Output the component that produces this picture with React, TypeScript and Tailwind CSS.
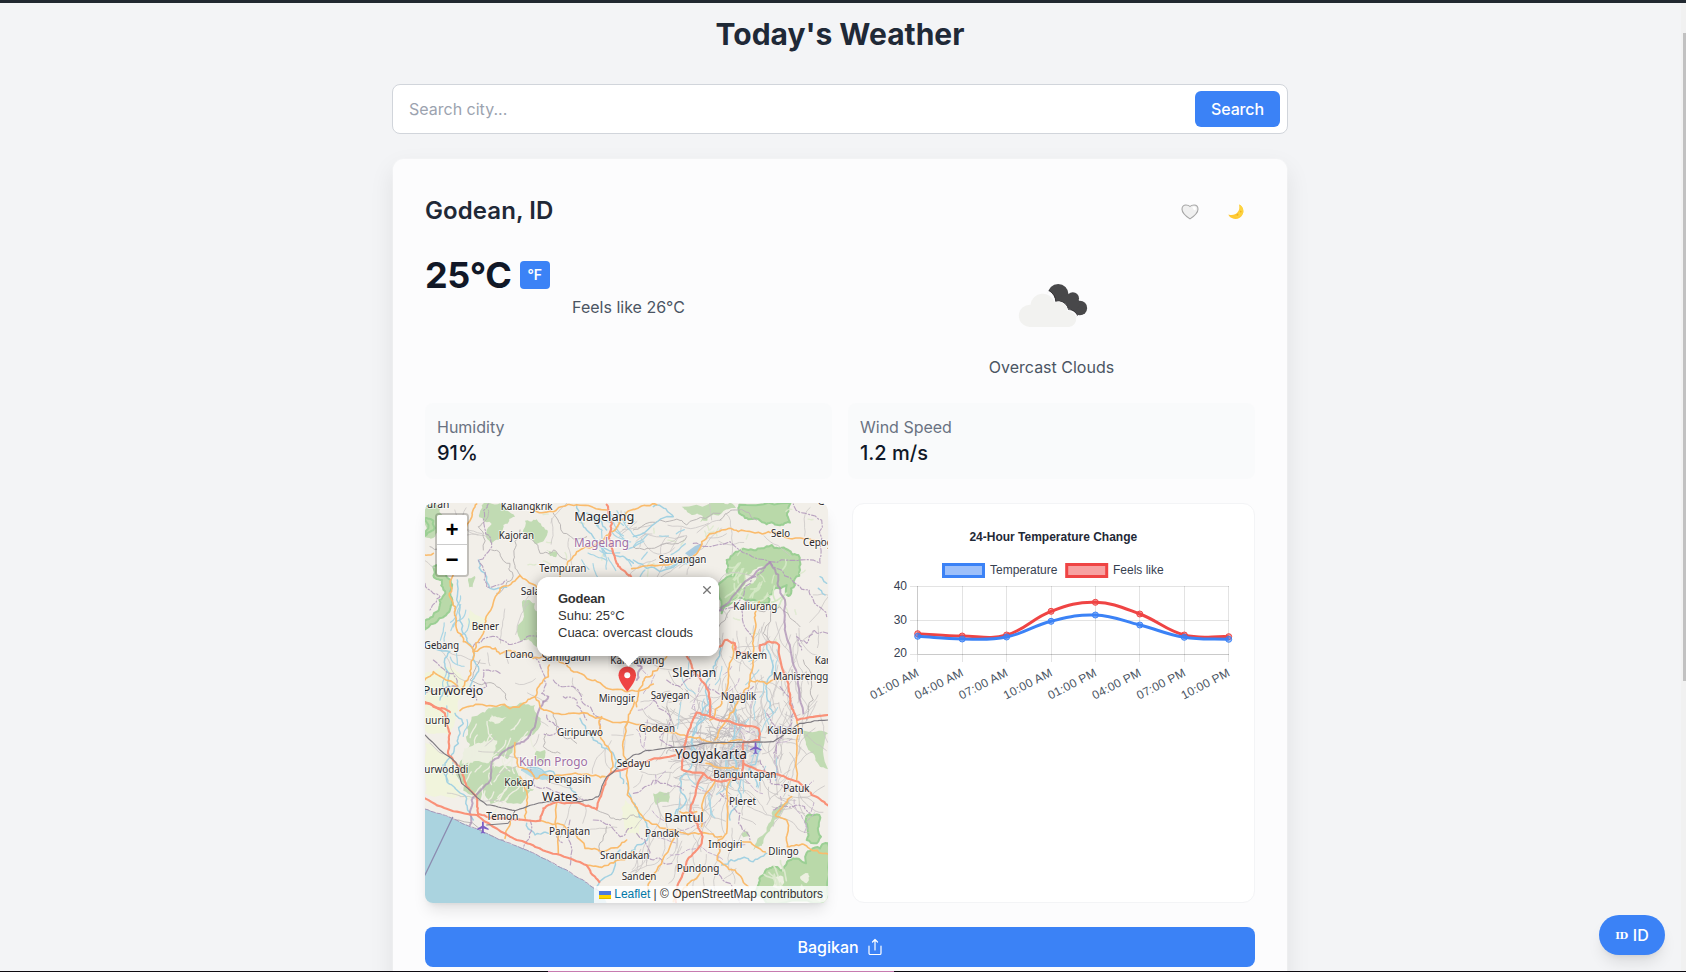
import React from "react";

type Pt = [number, number];

/* ---------- helpers for the map drawing ---------- */

function rng(seed: number) {
  let s = (seed * 2654435761) >>> 0;
  return () => {
    s = (s + 0x6d2b79f5) >>> 0;
    let t = s;
    t = Math.imul(t ^ (t >>> 15), t | 1);
    t ^= t + Math.imul(t ^ (t >>> 7), t | 61);
    return ((t ^ (t >>> 14)) >>> 0) / 4294967296;
  };
}

function parse(s: string): Pt[] {
  return s.split(" ").map((p) => p.split(",").map(Number) as Pt);
}

/* Subdivides a polyline and displaces it a little, so that it reads as a surveyed line. */
function wiggle(s: string, amount: number, seed: number, close = false) {
  const r = rng(seed);
  let pts = parse(s);
  if (close) pts = [...pts, pts[0]];
  let a = amount;
  for (let k = 0; k < 3; k++) {
    const out: Pt[] = [pts[0]];
    for (let i = 1; i < pts.length; i++) {
      const [x0, y0] = pts[i - 1];
      const [x1, y1] = pts[i];
      const d = Math.hypot(x1 - x0, y1 - y0);
      if (d > 9) {
        const m = Math.min(a, d / 5);
        out.push([(x0 + x1) / 2 + (r() - 0.5) * 2 * m, (y0 + y1) / 2 + (r() - 0.5) * 2 * m]);
      }
      out.push([x1, y1]);
    }
    pts = out;
    a *= 0.7;
  }
  return "M" + pts.map((p) => p[0].toFixed(1) + " " + p[1].toFixed(1)).join("L") + (close ? "Z" : "");
}

function walks(seed: number, n: number, x: number, y: number, w: number, h: number, step: number, len: number, dir?: number) {
  const r = rng(seed);
  let d = "";
  for (let i = 0; i < n; i++) {
    let px = x + r() * w;
    let py = y + r() * h;
    let a = dir === undefined ? Math.floor(r() * 4) * 1.571 + 0.25 + (r() - 0.5) * 0.5 : dir + (r() - 0.5) * 0.5;
    d += `M${px.toFixed(1)} ${py.toFixed(1)}`;
    const k = 3 + Math.floor(r() * len);
    for (let j = 0; j < k; j++) {
      a += (r() - 0.5) * 0.8;
      px += Math.cos(a) * step;
      py += Math.sin(a) * step;
      d += `L${px.toFixed(1)} ${py.toFixed(1)}`;
    }
  }
  return d;
}

const forests = [
  "15,15 48,12 62,40 80,70 60,84 45,110 15,112",
  "185,15 240,10 285,50 250,75 242,110 215,132 196,102 215,72 178,52",
  "315,62 350,58 382,90 374,118 350,132 330,110 308,95",
  "378,150 410,155 408,172 390,168",
  "310,300 345,310 368,360 372,405 350,442 325,418 300,422 312,350",
  "145,235 165,228 158,262 148,262",
  "785,20 915,12 948,24 905,40 862,62 840,66 848,48 815,45",
  "155,650 220,622 300,608 345,615 362,655 332,708 292,728 262,778 222,770 208,812 180,905 130,872 116,800 150,732 140,682",
  "210,800 288,800 342,868 302,912 212,912 190,880",
  "350,752 375,750 372,790 352,788",
  "700,880 745,875 745,908 708,915",
  "1090,912 1055,940 1018,1012 1000,1050 1030,1030 1060,975 1110,905",
  "1142,690 1224,700 1224,808 1200,800 1165,750",
  "965,1000 985,995 988,1008 970,1012",
];
const reserves = [
  "15,55 40,62 44,84 15,108",
  "40,200 66,198 92,240 97,300 88,335 58,355 15,388 15,362 58,322 76,280 66,240 42,232",
  "920,180 985,150 1025,145 1055,135 1105,150 1135,165 1140,210 1125,255 1105,288 1100,255 1065,265 1045,288 1045,310 1020,308 985,300 940,300 905,340 898,250 945,225 920,212",
  "958,14 1112,8 1110,68 1080,76 1040,73 985,58 965,45",
  "1160,948 1198,945 1203,1010 1190,1030 1160,1020",
  "1018,1135 1058,1100 1085,1112 1118,1075 1158,1090 1178,1045 1224,1030 1224,1209 1040,1209 1008,1180",
];
const farmland = [
  "15,520 100,500 150,560 110,640 90,700 15,690",
  "15,730 90,770 120,850 160,900 15,880",
  "150,330 210,345 190,400 150,390",
  "615,900 660,930 660,1020 620,1000",
];
const clearings = [
  "132,745 175,728 232,722 205,790 150,788 125,792",
  "215,640 260,650 240,668 205,662",
  "975,225 1030,200 1000,250 965,270",
  "1060,1135 1090,1130 1085,1165 1058,1160",
  "1140,1130 1165,1120 1160,1150",
];
const primary = [
  "170,12 150,62 120,120 95,235 88,280 106,330 108,380 130,425 160,455 152,525 120,572 78,540 40,515 15,540",
  "160,455 190,400 205,340 240,265 300,226 352,262",
  "160,455 200,440 240,462 285,455 340,475 395,462 430,490 480,520 540,548 621,575 700,552",
  "330,26 400,35 470,14 560,30",
  "420,230 442,195 470,155 520,140 565,105 600,60 645,28 710,14",
  "120,632 200,618 270,626 320,605 345,590 352,565 385,530 388,495",
  "345,590 362,625 378,630 450,640 540,652 632,668 715,690 805,712 860,724 965,720",
  "635,206 745,195 825,165 860,115 905,90 955,95 1045,95 1095,112 1195,122",
  "1018,305 1005,360 998,430 990,540 970,585 930,640 885,720",
  "940,430 925,510 905,600 870,660",
  "640,600 625,660 610,750 622,885 675,960 735,985 815,1000 905,1010",
  "990,540 1040,552 1085,540",
  "740,470 690,530 668,555 650,620",
  "1130,662 1130,840",
  "1115,890 1066,945 1100,960 1102,1040 1160,1038 1224,1062",
  "930,842 920,1000 895,1020 892,1080 945,1110 985,1160",
  "885,840 850,900 845,980",
  "770,1000 715,1100 675,1190",
  "965,1025 1036,1056",
  "545,650 540,700 575,760 572,820",
  "285,728 295,800 345,835 400,828 500,822 555,830",
  "300,830 322,910 316,955",
  "360,962 430,975 495,1045 560,1052 620,1020",
  "410,910 415,1060",
  "270,958 255,1015",
  "500,1096 570,1090 640,1055",
  "858,790 955,805",
  "845,1110 800,1160 760,1205",
  "780,935 830,935",
  "15,165 40,160",
];
const trunk = [
  "560,14 576,70 566,112 590,190 615,214 640,240",
  "15,606 75,640 90,700 84,760 112,795 140,860 172,898 175,945",
  "15,895 90,930 170,945 270,1010 330,1032 410,1062 500,1096 538,1146",
  "175,942 240,955 360,962 370,925 410,905 480,910 530,928 552,858 572,820 650,790 765,766",
  "898,440 915,420 945,430 946,450 985,460",
  "1020,452 1020,435 1045,425 1077,435 1085,500 1105,560 1110,612 1132,660 1224,645",
  "800,468 825,520 865,572 870,650",
  "830,638 800,710 785,808 850,820 875,840 912,842 960,835 970,790 972,724 1018,720 1016,686 915,662 870,650 830,638",
  "850,820 828,870 810,935 832,970 845,1000 845,1030 805,1075 775,1150 768,1209",
  "970,790 1045,820 1135,845 1175,885 1224,916",
  "15,610 45,622 90,636",
];
const rivers = [
  "15,425 90,455 75,500 85,560 60,600",
  "112,240 110,300 125,370 140,420 160,450 175,500 150,560",
  "175,180 200,230 210,265 260,262",
  "105,640 130,670 115,710 100,760 75,790 85,850 140,895 160,960",
  "480,655 520,720 560,745 585,800 610,850",
  "470,15 480,60 500,90 530,130 560,160",
  "500,40 540,60 560,90",
  "540,120 600,170 640,190",
  "900,440 880,500 860,560 875,620 820,700 830,760",
  "1040,430 1060,500 1040,570 1060,640",
  "940,600 950,660 930,760 960,830 960,900 930,960",
  "1015,690 1020,750 990,800 1010,860",
  "600,1050 560,1130 530,1165",
  "620,850 645,920 680,970 670,1030 630,1060",
  "870,600 815,720 820,780 780,840 800,900 760,960",
  "905,1095 950,1080 1000,1085 1040,1060",
  "320,970 345,1005 385,1000",
  "700,20 760,50 640,110",
  "640,180 720,215 830,180",
  "1200,230 1220,250",
  "1195,265 1215,285",
  "305,810 400,815 450,860 470,890",
];
const streets = [
  "300,90 280,180 300,225",
  "205,30 175,80 190,150",
  "215,150 270,190 275,240 230,280",
  "305,100 360,160 400,150 440,180",
  "30,140 80,170 130,190",
  "400,40 430,100 500,110",
  "640,90 720,60 800,75 900,40",
  "640,140 740,130 800,110",
  "900,60 950,30 1010,60",
  "930,330 890,400 900,440",
  "1010,330 1080,320 1140,380",
  "740,620 760,700 740,760",
  "180,480 150,540 230,560 260,600",
  "400,640 420,700 470,730",
  "90,960 250,1020",
  "1050,320 1030,400 1060,430",
  "530,930 600,960 660,950",
  "560,980 540,1060",
  "420,760 370,740 380,700",
  "1150,480 1180,600 1160,660",
];
const borders = [
  "205,12 190,60 215,130 175,180 200,262 260,240",
  "160,440 230,410 300,425 370,400",
  "340,470 375,530 365,580 385,590",
  "40,480 100,520 115,560 15,580",
  "240,520 190,510 200,560 150,565 170,600",
  "400,540 460,560 520,640 540,700",
  "430,590 470,600 500,660",
  "380,645 420,690 370,700",
  "820,130 930,125 1050,185",
  "1050,185 960,300 900,330",
  "1050,185 1200,190 1205,60 1120,12",
  "1050,185 1140,260 1180,300 1220,350",
  "985,300 970,370 1000,420",
  "1224,400 1180,390 1160,430 1130,410 1145,450",
  "740,540 780,560 840,510",
  "700,600 750,650 720,710 760,750",
  "340,780 345,860 420,880 500,900",
  "450,960 450,1100",
  "330,960 310,1050",
  "640,880 700,840 790,870",
  "650,1000 700,1080 760,1090",
  "900,880 960,940 990,1020",
  "880,1100 930,1150 960,1209",
  "1020,780 1050,850 1130,870",
  "1040,640 1090,700 1060,760",
  "1060,930 1120,920 1170,940",
  "410,1010 430,1030",
  "520,960 600,1010 640,980",
  "860,560 940,590 1000,560",
  "1080,560 1120,640 1090,700",
  "15,250 60,290 30,330",
];
const regency = [
  "370,605 330,705 285,735 215,785 205,850 155,900 150,975",
  "1050,188 1075,240 1095,300 1102,420 1130,520 1150,640",
  "900,332 975,245 1050,188",
  "385,590 370,605",
  "650,540 665,500 630,470",
];

type Label = [string, number, number, number, number, string?];
const place = "#2b282b";
const county = "#a070a5";
const labels: Label[] = [
  ["ouran", 2, 88, 23, 31],
  ["Kaliangkrik", 242, 398, 29, 31],
  ["Magelang", 463, 643, 63, 38],
  ["Magelang", 462, 627, 141, 36, county],
  ["Kajoran", 236, 342, 118, 31],
  ["Tempuran", 358, 499, 217, 31],
  ["Salaman", 302, 425, 286, 31],
  ["Bener", 155, 237, 390, 31],
  ["Gebang", 12, 117, 448, 31],
  ["Loano", 255, 340, 473, 31],
  ["Samigaluh", 365, 512, 484, 31],
  ["Kalibawang", 571, 733, 493, 31],
  ["Purworejo", 8, 190, 585, 38],
  ["Minggir", 536, 645, 607, 31],
  ["G", 1193, 1214, 16, 31],
  ["Selo", 1053, 1110, 111, 31],
  ["Cepogo", 1149, 1256, 137, 31],
  ["Sawangan", 716, 859, 188, 31],
  ["Kaliurang", 940, 1072, 331, 31],
  ["Pakem", 946, 1041, 477, 31],
  ["Karang", 1184, 1282, 491, 31],
  ["Sleman", 757, 889, 530, 38],
  ["Manisrenggo", 1059, 1243, 541, 31],
  ["Sayegan", 692, 809, 598, 31],
  ["Ngaglik", 903, 1009, 600, 31],
  ["uurip", 16, 90, 673, 31],
  ["Purwodadi", -5, 145, 820, 31],
  ["Giripurwo", 411, 549, 708, 31],
  ["Kulon Progo", 297, 503, 799, 36, county],
  ["Kokap", 253, 340, 858, 31],
  ["Pengasih", 385, 513, 848, 31],
  ["Wates", 366, 474, 902, 38],
  ["Sedayu", 590, 691, 800, 31],
  ["Temon", 199, 295, 961, 31],
  ["Panjatan", 387, 510, 1006, 31],
  ["Srandakan", 540, 688, 1076, 31],
  ["Sanden", 605, 709, 1141, 31],
  ["Godean", 656, 765, 696, 31],
  ["Kalasan", 1042, 1150, 703, 31],
  ["Yogyakarta", 765, 981, 778, 42],
  ["Banguntapan", 880, 1069, 834, 31],
  ["Patuk", 1090, 1168, 876, 31],
  ["Pleret", 927, 1008, 916, 31],
  ["Bantul", 733, 851, 967, 38],
  ["Pandak", 675, 778, 1012, 31],
  ["Imogiri", 865, 967, 1043, 31],
  ["Dlingo", 1045, 1136, 1065, 31],
  ["Pundong", 770, 898, 1115, 31],
];

const plane =
  "M21 16v-2l-8-5V3.5c0-.83-.67-1.5-1.5-1.5S10 2.67 10 3.5V9l-8 5v2l8-2.5V19l-2 1.5V22l3.5-1 3.5 1v-1.5L13 19v-5.5l8 2.5z";

function MapDrawing() {
  return (
    <svg viewBox="15 9 1209 1200" className="block h-[400px] w-[403px] bg-[#f2efe9]" strokeLinejoin="round" strokeLinecap="round" fill="none">
      {farmland.map((p, i) => (
        <path key={i} d={wiggle(p, 12, i + 3, true)} fill="#f1f4dc" />
      ))}
      {forests.map((p, i) => (
        <path key={i} d={wiggle(p, 15, i + 20, true)} fill="#c1dbb3" />
      ))}
      {reserves.map((p, i) => (
        <path key={i} d={wiggle(p, 11, i + 50, true)} fill="#b9d9a9" stroke="#9bcf94" strokeWidth="6" />
      ))}
      {clearings.map((p, i) => (
        <path key={i} d={wiggle(p, 9, i + 70, true)} fill="#ecefe0" />
      ))}
      <path d={walks(11, 34, 150, 640, 190, 260, 9, 6, 2)} stroke="#eceee0" strokeWidth="4" />
      <path d={walks(12, 18, 930, 170, 180, 120, 9, 5, 2)} stroke="#d3e8c4" strokeWidth="5" />
      <path d={walks(13, 14, 1030, 1080, 190, 110, 8, 4, 1)} stroke="#dbe8cd" strokeWidth="5" />
      <path d={walks(14, 20, 780, 700, 230, 130, 10, 3)} stroke="#e2dcda" strokeWidth="20" opacity=".8" />
      <path d={walks(15, 60, 330, 20, 860, 420, 5, 3)} stroke="#dbe9cb" strokeWidth="4" opacity=".8" />

      <path d={walks(1, 70, 20, 20, 1180, 1000, 13, 9)} stroke="#cbc8c6" strokeWidth="2.4" />
      <path d={walks(2, 130, 740, 560, 400, 400, 12, 8)} stroke="#c6c2c2" strokeWidth="2.3" />
      <path d={walks(3, 110, 800, 640, 190, 190, 9, 6)} stroke="#bdb9bb" strokeWidth="2.4" />
      <path d={walks(4, 40, 640, 820, 330, 330, 12, 9, 1.8)} stroke="#cac6c6" strokeWidth="2.3" />
      <path d={walks(5, 50, 900, 340, 300, 320, 13, 9, 1.7)} stroke="#cac6c6" strokeWidth="2.3" />
      <path d={walks(6, 18, 640, 40, 300, 150, 14, 9, 2.7)} stroke="#c8c4c4" strokeWidth="2.3" />
      <path d={walks(7, 20, 480, 30, 150, 170, 9, 5, 1)} stroke="#a9d5e4" strokeWidth="3.6" />
      <path d={walks(8, 32, 780, 430, 330, 480, 10, 7, 1.75)} stroke="#add6e4" strokeWidth="3.2" />
      <path d={walks(9, 10, 660, 70, 190, 150, 9, 5, 2.7)} stroke="#a9d5e4" strokeWidth="4" />
      <path d={walks(10, 14, 60, 240, 100, 600, 9, 7, 1.6)} stroke="#a9d5e4" strokeWidth="3.6" />
      <path d={walks(16, 40, 640, 480, 560, 600, 9, 9)} stroke="#c2adc9" strokeWidth="2.8" strokeDasharray="12 6" />
      <path d="M305 812l40-8 30 12 22 20-30 4-34-10z" fill="#b5dbe6" />
      <path d="M795 160l30-22 20-8-10 24-24 18z" fill="#a9cbe0" />

      {streets.map((p, i) => (
        <path key={i} d={wiggle(p, 12, i + 90)} stroke="#bcb8b7" strokeWidth="3" />
      ))}
      {rivers.map((p, i) => (
        <path key={i} d={wiggle(p, 11, i + 120)} stroke="#a2d1e2" strokeWidth="4.4" />
      ))}
      {borders.map((p, i) => (
        <path key={i} d={wiggle(p, 12, i + 160)} stroke="#b39abb" strokeWidth="3.4" strokeDasharray="15 6 4 6" opacity=".9" />
      ))}
      {regency.map((p, i) => (
        <path key={i} d={wiggle(p, 6, i + 200)} stroke="#ab8fb4" strokeWidth="6" opacity=".75" />
      ))}
      <path
        d={wiggle("15,927 85,950 150,980 200,1000 255,1025 320,1050 390,1085 440,1110 490,1140 522,1165 545,1180 560,1209", 2, 9) + "L15 1209Z"}
        fill="#aad3df"
      />
      <path
        d={wiggle("15,927 85,950 150,980 200,1000 255,1025 320,1050 390,1085 440,1110 490,1140 522,1165 545,1180", 2, 9)}
        stroke="#a495b8"
        strokeWidth="3"
        strokeDasharray="14 5"
      />
      <path d="M98 952L15 1125" stroke="#8c8cb0" strokeWidth="4" />
      {primary.map((p, i) => (
        <path key={i} d={wiggle(p, 8, i + 220)} stroke="#fabb6c" strokeWidth="4.8" />
      ))}
      {trunk.map((p, i) => (
        <path key={i} d={wiggle(p, 4, i + 260)} stroke="#f99178" strokeWidth="6.4" />
      ))}
      <path
        d={wiggle(
          "15,705 110,790 125,850 200,915 285,932 380,905 480,905 535,890 560,830 640,765 700,750 850,730 1060,725 1140,670 1224,660",
          3,
          300,
        )}
        stroke="#7d7a80"
        strokeWidth="3.4"
      />
      <path d="M200 975L265 970L285 932" stroke="#7d7a80" strokeWidth="3" />
      <path d={plane} fill="#7d5fc4" transform="translate(168 961) scale(1.8)" />
      <path d={plane} fill="#7d5fc4" transform="translate(986 723) scale(1.8)" />

      <g fontFamily="'Noto Sans', sans-serif" strokeWidth="6">
        {labels.map(([t, x0, x1, y, size, color], i) => (
          <text
            key={i}
            x={x0}
            y={y}
            fontSize={size}
            textLength={x1 - x0}
            lengthAdjust="spacingAndGlyphs"
            fill={color ?? place}
            stroke="rgba(255,255,255,.6)"
            paintOrder="stroke"
          >
            {t}
          </text>
        ))}
      </g>
    </svg>
  );
}

function WeatherMap() {
  return (
    <div className="relative h-[400px] overflow-hidden rounded-lg">
      <MapDrawing />

      <svg viewBox="0 0 24 24" className="absolute top-[161px] left-[187px] h-[30px] w-[30.500px]">
        <path
          fill="#ef4444"
          d="M12 2C8.13 2 5 5.13 5 9c0 5.25 7 13 7 13s7-7.75 7-13c0-3.87-3.13-7-7-7z"
        />
        <circle cx="12" cy="9" r="2.4" fill="#fff" />
      </svg>

      <div className="absolute top-[74px] left-[112px] h-[79px] w-[182px] rounded-xl bg-white shadow-[0_3px_14px_rgba(0,0,0,0.4)]">
        <div className="absolute top-full left-[71px] h-5 w-10 overflow-hidden">
          <div className="mx-auto -mt-2.5 size-[17px] rotate-45 bg-white shadow-[0_3px_14px_rgba(0,0,0,0.4)]" />
        </div>
        <div className="relative h-full rounded-xl bg-white pt-[13px] pl-[21px] font-['Liberation_Sans',sans-serif] text-[13px] leading-[17px] whitespace-nowrap text-[#333]">
          <p className="font-bold tracking-[-0.02em]">Godean</p>
          <p>Suhu: 25°C</p>
          <p>Cuaca: overcast clouds</p>
        </div>
        <svg viewBox="0 0 8 8" className="absolute top-[8.500px] right-2 size-2" stroke="#757575" strokeWidth="1.3">
          <path d="M0.3 0.3L7.7 7.7M7.7 0.3L0.3 7.7" />
        </svg>
      </div>

      <div className="absolute top-2.5 left-2.5 w-[34px] rounded border-2 border-black/20 bg-clip-padding text-center font-['Liberation_Mono',monospace] text-[22px] font-bold text-black">
        <div className="h-[30px] rounded-t-[2px] border-b border-[#ccc] bg-white leading-[34px]">+</div>
        <div className="h-[30px] rounded-b-[2px] bg-white leading-[34px]">−</div>
      </div>

      <div className="absolute right-0 bottom-0 flex h-[17px] items-center bg-white/80 px-[5px] font-['Liberation_Sans',sans-serif] text-xs leading-[17px] whitespace-nowrap text-[#333]">
        <svg viewBox="0 0 12 8" className="mr-[3px] h-2 w-3">
          <path fill="#4C7BE1" d="M0 0h12v4H0z" />
          <path fill="#FFD500" d="M0 4h12v3H0z" />
          <path fill="#E0BC00" d="M0 7h12v1H0z" />
        </svg>
        <span className="text-[#0078a8]">Leaflet</span>
        <span className="whitespace-pre"> | © OpenStreetMap contributors</span>
      </div>
    </div>
  );
}

/* ---------- chart ---------- */

const xs = [65.7, 110.2, 154.6, 199.1, 243.4, 287.8, 332.3, 376.7];
const times = ["01:00 AM", "04:00 AM", "07:00 AM", "10:00 AM", "01:00 PM", "04:00 PM", "07:00 PM", "10:00 PM"];
const feels = [130.7, 133, 132, 108.3, 99.3, 111, 132, 133.7];
const temps = [133.3, 136, 134, 118.3, 112, 122, 134.3, 136.3];

function spline(ys: number[]) {
  const t = 0.4;
  const n = ys.length;
  const cps = ys.map((y, i) => {
    const px = xs[Math.max(i - 1, 0)];
    const py = ys[Math.max(i - 1, 0)];
    const nx = xs[Math.min(i + 1, n - 1)];
    const ny = ys[Math.min(i + 1, n - 1)];
    const d0 = Math.hypot(xs[i] - px, y - py);
    const d1 = Math.hypot(nx - xs[i], ny - y);
    const a = (t * d0) / (d0 + d1);
    const b = (t * d1) / (d0 + d1);
    return [xs[i] - a * (nx - px), y - a * (ny - py), xs[i] + b * (nx - px), y + b * (ny - py)];
  });
  let d = `M${xs[0]} ${ys[0]}`;
  for (let i = 1; i < n; i++) d += `C${cps[i - 1][2]} ${cps[i - 1][3]} ${cps[i][0]} ${cps[i][1]} ${xs[i]} ${ys[i]}`;
  return d;
}

function Series({ ys, color, fill }: { ys: number[]; color: string; fill: string }) {
  return (
    <g stroke={color}>
      <path d={spline(ys)} fill="none" strokeWidth="3" strokeLinejoin="round" />
      {ys.map((y, i) => (
        <circle key={i} cx={xs[i]} cy={y} r="3" fill={fill} strokeWidth="1" />
      ))}
    </g>
  );
}

function TemperatureChart() {
  return (
    <div className="h-[400px] rounded-xl border border-gray-100 bg-white">
      <svg viewBox="1 1 401 398" className="block h-[398px] w-[401px]" fontFamily="'Liberation Sans', Arial, sans-serif" fontSize="12" fill="#1f2937">
        <text x="201.3" y="38" textAnchor="middle" fontWeight="bold">24-Hour Temperature Change</text>
        <rect x="91.5" y="61.5" width="40" height="12" fill="rgba(59,130,246,.5)" stroke="#3b82f6" strokeWidth="3" />
        <text x="138" y="71" fill="#374151">Temperature</text>
        <rect x="214.7" y="61.5" width="40" height="12" fill="rgba(239,68,68,.5)" stroke="#ef4444" strokeWidth="3" />
        <text x="261" y="71" fill="#374151">Feels like</text>
        <g stroke="#000" strokeOpacity=".11" shapeRendering="crispEdges">
          {[83.5, 117.5, 151.5].map((y) => (
            <path key={y} d={`M58 ${y}H377`} />
          ))}
          {xs.map((x) => (
            <path key={x} d={`M${Math.floor(x) + 0.5} 83V159`} />
          ))}
          <path d="M66 151.5H377M65.5 83V151" />
        </g>
        <g textAnchor="end" fill="#374151">
          <text x="55" y="87">40</text>
          <text x="55" y="121">30</text>
          <text x="55" y="154.3">20</text>
        </g>
        <Series ys={feels} color="#ef4444" fill="rgba(239,68,68,.5)" />
        <Series ys={temps} color="#3b82f6" fill="rgba(59,130,246,.5)" />
        <g textAnchor="end" fill="#4b5563">
          {xs.map((x, i) => (
            <text key={i} textLength="53" transform={`translate(${x + 2} 172.3) rotate(-27.5)`}>{times[i]}</text>
          ))}
        </g>
      </svg>
    </div>
  );
}

/* ---------- icons ---------- */

function Heart() {
  return (
    <svg viewBox="0 0 18 16" className="h-4 w-[18px]">
      <path
        d="M9 14.9C5.6 12.6 1 9.2 1 5.2 1 2.6 2.7 1 4.9 1 6.7 1 8.2 1.600 9 2.500 9.800 1.600 11.300 1 13.100 1 15.300 1 17 2.600 17 5.200c0 4-4.600 7.400-8 9.700z"
        fill="#f0f0f0"
        stroke="#a6a6a6"
        strokeWidth="1.100"
      />
      <path d="M11.300 3.200c1-1 2.800-.8 3.500.5.500 1.400-.4 2.700-1.700 2.500z" fill="#fff" />
    </svg>
  );
}

function Moon() {
  return (
    <svg viewBox="0 0 16 16" className="size-4">
      <path d="M11.2.6c3.600 1.700 5.100 6 3.500 9.600-1.800 4.300-6.800 6-10.800 3.900C2.300 13.300 1 12 .4 10.400c3.300 1.300 7 .6 9.200-2.100 1.900-2.200 2.400-5.100 1.600-7.700z" fill="#ffc933" />
      <path d="M11.2.6c3 1.400 4.600 4.600 4.100 7.800-1.200 3-4.500 5-8.300 4.600 3.200-1.400 5.800-6.500 4.200-12.400z" fill="#fdd33f" />
      <circle cx="9.5" cy="10.800" r="1" fill="#f2b01e" />
      <circle cx="12.700" cy="7.600" r=".9" fill="#f2b01e" />
    </svg>
  );
}

function OvercastIcon() {
  return (
    <svg viewBox="485.5 45 300 300" className="mx-auto block size-[100px]">
      <g fill="#48484a">
        <circle cx="654" cy="163" r="31" />
        <circle cx="698" cy="175" r="18.5" />
        <circle cx="719" cy="204" r="22" />
        <path d="M654 170L700 160L722 190L705 215L660 195z" />
      </g>
      <path d="M627 152a43 43 0 0 1 20 33a30 30 0 0 1 38 24a32 32 0 0 1 27 17L690 245L600 220z" fill="#fcfcfd" stroke="#232024" strokeWidth="2.500" />
      <path d="M624 152a43 43 0 0 1 20 34a30 30 0 0 1 39 25a32 32 0 0 1 28 17L700 250L590 230z" fill="#fcfcfd" />
      <path
        d="M568 261a33.5 33.5 0 0 1 3-67a37 37 0 0 1 72-7a27 27 0 0 1 38 26a24 24 0 0 1 6 48z"
        fill="#f2f2f0"
      />
    </svg>
  );
}

function Stat({ label, value }: { label: string; value: string }) {
  return (
    <div className="rounded-lg bg-gray-50 p-3">
      <p className="text-gray-500">{label}</p>
      <p className="text-xl font-medium text-gray-900">{value}</p>
    </div>
  );
}

export default function App() {
  return (
    <div className="relative flex h-[972px] w-[1686px] flex-col overflow-hidden bg-[#f3f4f6] font-['Inter',sans-serif] text-base text-gray-900">
      <div className="h-[3px] shrink-0 bg-[#212830]" />
      <div className="flex min-h-0 flex-1 overflow-hidden">
        <main className="flex flex-1 justify-center overflow-hidden">
          <div className="w-[896px] pt-[13px]">
            <h1 className="mb-8 text-center text-3xl font-bold text-[#1f2937]">Today's Weather</h1>

            <div className="mb-6 flex h-[50px] items-center justify-between rounded-lg border border-[#d1d5db] bg-white pr-[7px] pl-4">
              <span className="text-[#9ca3af]">Search city...</span>
              <button className="w-[85px] rounded-md bg-[#3b82f6] py-1.5 font-medium tracking-[-0.01em] text-white">Search</button>
            </div>

            <section className="rounded-xl border border-white/20 bg-[#fcfcfd] bg-clip-padding p-8 shadow-[0_10px_25px_rgba(0,0,0,0.08)]">
              <div className="mb-6 flex h-10 items-center justify-between">
                <h2 className="text-2xl font-semibold tracking-[0.003em] text-[#1f2937]">Godean, ID</h2>
                <div className="flex gap-2">
                  <button className="flex h-10 w-[38px] items-center justify-center pt-0.5"><Heart /></button>
                  <button className="flex h-10 w-[38px] items-center justify-center pt-0.5"><Moon /></button>
                </div>
              </div>

              <div className="mb-6 grid grid-cols-2 gap-4">
                <div>
                  <div className="flex h-10 items-center gap-2">
                    <span className="text-4xl font-bold tracking-[-0.01em] text-[#111827]">25°C</span>
                    <button className="h-7 rounded bg-[#3b82f6] px-2 text-sm font-semibold tracking-[-0.02em] text-white">°F</button>
                  </div>
                  <p className="text-center text-[#4b5563]">Feels like 26°C</p>
                </div>
                <div>
                  <OvercastIcon />
                  <p className="text-center text-[#4b5563]">Overcast Clouds</p>
                </div>
              </div>

              <div className="mb-6 grid grid-cols-2 gap-4">
                <Stat label="Humidity" value="91%" />
                <Stat label="Wind Speed" value="1.2 m/s" />
              </div>

              <div className="mb-6 grid grid-cols-2 gap-6">
                <div className="rounded-lg shadow-lg">
                  <WeatherMap />
                </div>
                <TemperatureChart />
              </div>

              <button className="flex h-10 w-full items-center justify-center gap-2 rounded-lg bg-[#3b82f6] font-medium text-white">
                Bagikan
                <svg viewBox="0 0 16 18" className="h-[18px] w-4" fill="none" stroke="#fff" strokeWidth="1.2" strokeLinecap="round" strokeLinejoin="round">
                  <path d="M8 12V1.500M5.500 4L8 1.500l2.500 2.500M2 8v7.200a1.300 1.300 0 0 0 1.300 1.300h9.400a1.300 1.300 0 0 0 1.300-1.300V8" />
                </svg>
              </button>
            </section>
          </div>
        </main>
        <div className="w-1.5 border-l border-[#f3f4f6] bg-[#f1f1f1] pt-[30px]">
          <div className="ml-0.5 h-[648px] bg-[#c1c1c1]" />
        </div>
      </div>
      <div className="absolute bottom-0 left-0 flex h-px w-full bg-[#0d0a10]">
        <div className="ml-[548px] h-px w-[346px] bg-[#c77bb0]" />
      </div>
      <button className="absolute top-[915px] right-[21px] flex h-10 w-[66px] items-center justify-center gap-[5px] rounded-full bg-[#3b82f6] font-medium text-white shadow-lg">
        <span className="pt-0.5 font-['DejaVu_Serif',serif] text-[10px]/4 font-bold tracking-[-0.04em]">ID</span>
        <span>ID</span>
      </button>
    </div>
  );
}
